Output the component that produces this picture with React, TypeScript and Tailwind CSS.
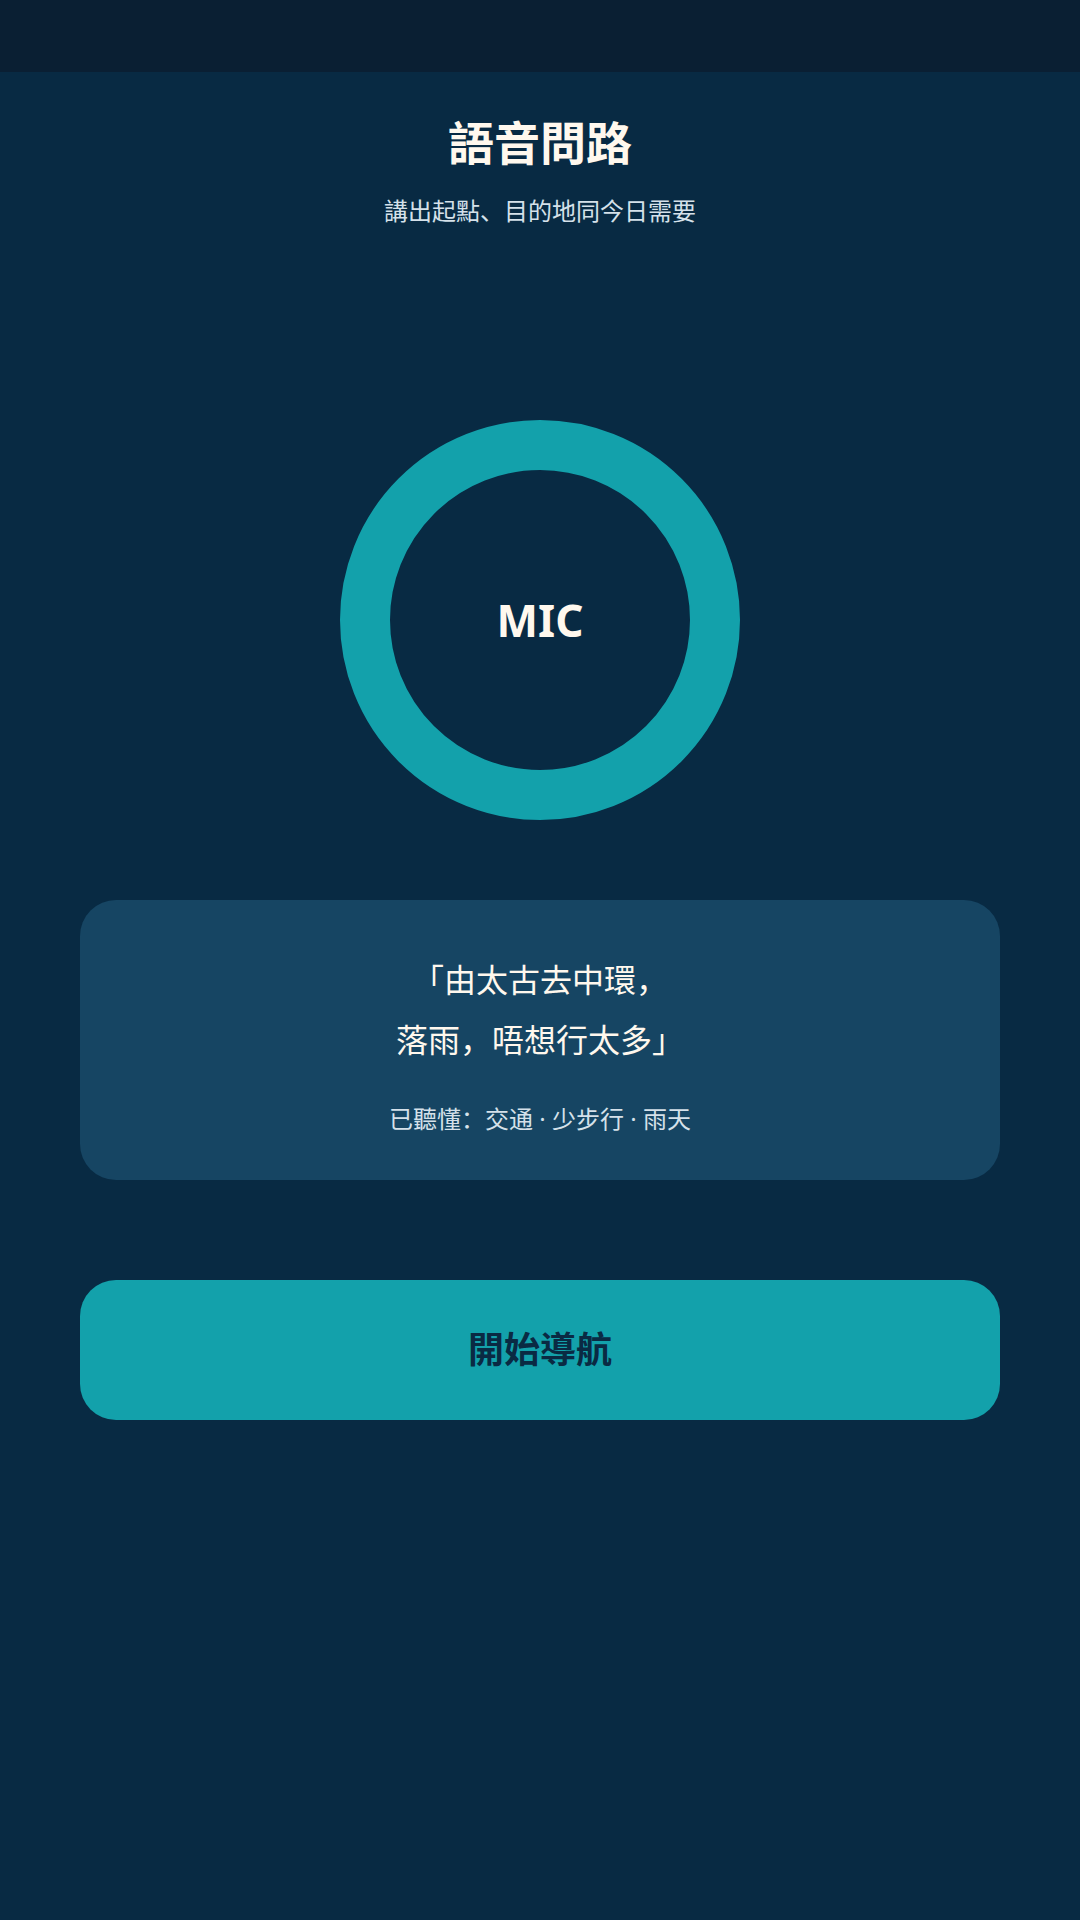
import { FC } from 'react';

const cjk = "font-['Noto_Sans','Noto_Sans_CJK_SC',sans-serif]";

const MicButton: FC = () => (
  <button className="w-[400px] h-[400px] rounded-full border-[50px] border-[#13a1ab] bg-[#082a43] flex items-center justify-center">
    <span className="text-[44px] leading-none font-bold text-[#fff8ee]">MIC</span>
  </button>
);

export default function App() {
  return (
    <div className={`min-h-screen w-full bg-[#082a43] flex flex-col ${cjk}`}>
      <div className="h-[72px] bg-[#0a1f33] shrink-0" />

      <div className="flex flex-col items-center px-[80px]">
        <h1 className="mt-[40px] text-[46px] leading-[60px] font-bold text-[#fff8ee]">語音問路</h1>
        <p className="mt-[22px] text-[24px] leading-[34px] text-[#d5e1ea]">講出起點、目的地同今日需要</p>

        <div className="mt-[192px]">
          <MicButton />
        </div>

        <div className="mt-[80px] w-full h-[280px] rounded-[36px] bg-[#164563] flex flex-col items-center pt-[50px]">
          <p className="text-[32px] leading-[60px] text-[#fff8ee] text-center">
            「由太古去中環，
            <br />
            落雨，唔想行太多」
          </p>
          <p className="mt-[32px] text-[24px] leading-[34px] text-[#d5e1ea]">
            已聽懂：交通 · 少步行 · 雨天
          </p>
        </div>

        <button className="mt-[100px] w-full h-[140px] rounded-[36px] bg-[#13a1ab] flex items-center justify-center">
          <span className="text-[36px] font-bold text-[#0a2a43]">開始導航</span>
        </button>
      </div>
    </div>
  );
}
